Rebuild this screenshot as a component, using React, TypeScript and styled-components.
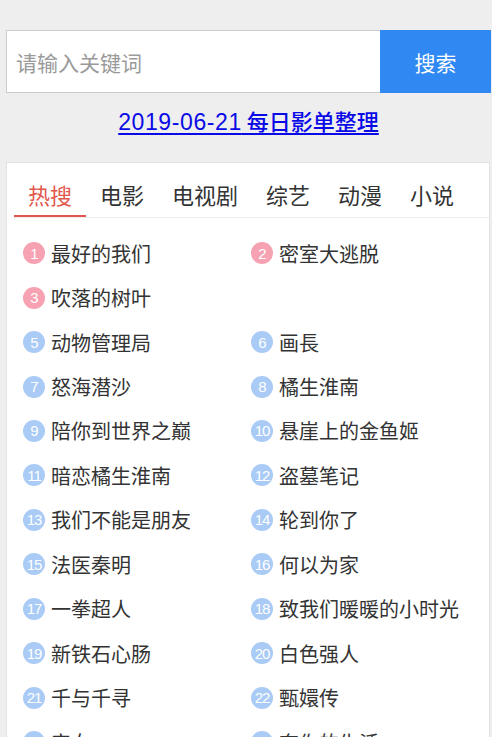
import React from 'react';
import styled, { createGlobalStyle } from 'styled-components';

const GlobalStyle = createGlobalStyle`
  body {
    margin: 0;
    background: #eeeeee;
    font-family: "Noto Sans CJK SC", "Noto Sans", sans-serif;
  }
`;

type Item = {
  rank: number;
  title: string;
};

const tabs = ['热搜', '电影', '电视剧', '综艺', '动漫', '小说'];

const items: (Item | null)[] = [
  { rank: 1, title: '最好的我们' },
  { rank: 2, title: '密室大逃脱' },
  { rank: 3, title: '吹落的树叶' },
  null,
  { rank: 5, title: '动物管理局' },
  { rank: 6, title: '画長' },
  { rank: 7, title: '怒海潜沙' },
  { rank: 8, title: '橘生淮南' },
  { rank: 9, title: '陪你到世界之巅' },
  { rank: 10, title: '悬崖上的金鱼姬' },
  { rank: 11, title: '暗恋橘生淮南' },
  { rank: 12, title: '盗墓笔记' },
  { rank: 13, title: '我们不能是朋友' },
  { rank: 14, title: '轮到你了' },
  { rank: 15, title: '法医秦明' },
  { rank: 16, title: '何以为家' },
  { rank: 17, title: '一拳超人' },
  { rank: 18, title: '致我们暖暖的小时光' },
  { rank: 19, title: '新铁石心肠' },
  { rank: 20, title: '白色强人' },
  { rank: 21, title: '千与千寻' },
  { rank: 22, title: '甄嬛传' },
  { rank: 23, title: '帝女' },
  { rank: 24, title: '奔你的生活' },
];

export default function App() {
  return (
    <Page>
      <GlobalStyle />
      <SearchBar>
        <SearchInput placeholder="请输入关键词" />
        <SearchButton>搜索</SearchButton>
      </SearchBar>
      <Headline>
        <HeadLink href="#">
          <DateText>2019-06-21</DateText> 每日影单整理
        </HeadLink>
      </Headline>
      <Card>
        <Tabs>
          {tabs.map((t, i) => (
            <Tab key={t} active={i === 0}>
              {t}
            </Tab>
          ))}
        </Tabs>
        <List>
          {items.map((item, i) =>
            item ? (
              <Row key={i}>
                <Badge hot={item.rank <= 3}>{item.rank}</Badge>
                <Name>{item.title}</Name>
              </Row>
            ) : (
              <Row key={i} />
            )
          )}
        </List>
      </Card>
    </Page>
  );
}

const Page = styled.div`
  padding: 30px 1px 0 6px;
`;

const SearchBar = styled.div`
  display: flex;
  height: 63px;
`;

const SearchInput = styled.input`
  flex: 1;
  min-width: 0;
  box-sizing: border-box;
  height: 100%;
  border: 1px solid #cccccc;
  border-right: none;
  background: #fff;
  padding: 0 0 0 9px;
  font-family: "Noto Sans CJK SC", sans-serif;
  font-size: 21px;
  color: #333;
  outline: none;
  &::placeholder {
    color: #9a9a9a;
  }
`;

const SearchButton = styled.button`
  width: 111px;
  height: 100%;
  border: none;
  background: #3089f2;
  color: #fff;
  font-family: "Noto Sans CJK SC", sans-serif;
  font-size: 21px;
  padding: 0;
`;

const Headline = styled.div`
  display: flex;
  justify-content: center;
  padding: 10px 0 23px;
`;

const HeadLink = styled.a`
  color: #0a0ae6;
  font-size: 22px;
  font-weight: 500;
  line-height: 34px;
  text-decoration: underline;
  text-underline-offset: 3px;
  font-family: "Noto Sans CJK SC", sans-serif;
`;

const DateText = styled.span`
  font-family: "Liberation Sans", sans-serif;
  font-size: 23px;
  letter-spacing: 0.6px;
`;

const Card = styled.div`
  background: #fff;
  border: 1px solid #e2e2e2;
  border-bottom: none;
  margin-right: 1px;
`;

const Tabs = styled.div`
  display: flex;
  margin-left: 7px;
  border-bottom: 1px solid #ececec;
`;

const Tab = styled.div<{ active?: boolean }>`
  padding: 16px 14px 6px;
  font-size: 22px;
  line-height: 30px;
  color: ${({ active }) => (active ? '#e2574c' : '#333')};
  border-bottom: 2px solid ${({ active }) => (active ? '#e2574c' : 'transparent')};
`;

const List = styled.div`
  display: grid;
  grid-template-columns: 228px 228px;
  grid-auto-rows: 44.45px;
  padding: 13px 0 0 16px;
`;

const Row = styled.div`
  display: flex;
  align-items: center;
`;

const Badge = styled.span<{ hot?: boolean }>`
  width: 22px;
  height: 22px;
  border-radius: 50%;
  flex-shrink: 0;
  display: flex;
  align-items: center;
  justify-content: center;
  background: ${({ hot }) => (hot ? '#f6a2b3' : '#a9cbf5')};
  color: #fff;
  font-family: "Liberation Sans", sans-serif;
  font-size: 15px;
  letter-spacing: -1px;
  margin-right: 6px;
`;

const Name = styled.span`
  font-size: 20px;
  color: #333;
  white-space: nowrap;
`;
